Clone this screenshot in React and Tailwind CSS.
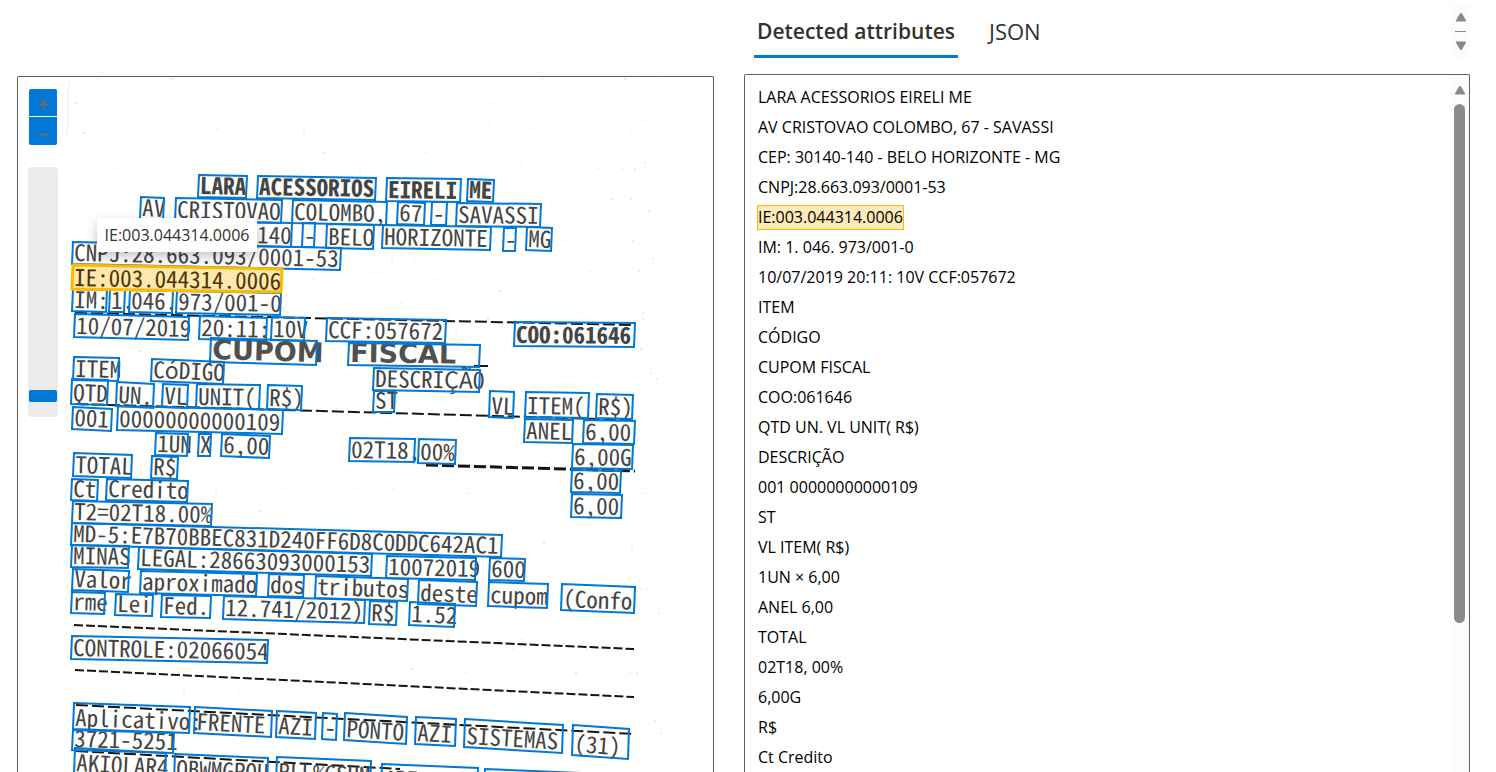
import React, { useState } from "react";

const MONO = '"Noto Sans Mono CJK JP", "Liberation Mono", monospace';

// Recognised words: text, left, top, width, height, drop across the width
const WORDS = [
  ["LARA", 199, 175, 48, 22, 1, "b"],
  ["ACESSORIOS", 258, 176, 118, 22, 2, "b"],
  ["EIRELI", 387, 178, 74, 23, 1, "b"],
  ["ME", 468, 179, 26, 22, 1, "b"],
  ["AV", 141, 197, 23, 22, 1],
  ["CRISTOVAO", 176, 198, 106, 23, 2],
  ["COLOMBO,", 293, 200, 94, 23, 2],
  ["67", 398, 202, 27, 22, 1],
  ["-", 432, 202, 15, 23, 0],
  ["SAVASSI", 457, 203, 84, 23, 1],
  ["CEP:", 130, 221, 46, 22, 1],
  ["30140-140", 187, 221, 105, 24, 2],
  ["-", 303, 223, 12, 24, 0],
  ["BELO", 327, 224, 47, 24, 1],
  ["HORIZONTE", 383, 225, 108, 23, 2],
  ["-", 504, 228, 12, 23, 0],
  ["MG", 527, 227, 25, 23, 1],
  ["CNPJ:28.663.093/0001-53", 73, 242, 268, 22, 6],
  ["IM:", 73, 289, 34, 22, 1],
  ["1.", 110, 290, 15, 22, 0],
  ["046.", 130, 290, 43, 22, 1],
  ["973/001-0", 177, 291, 104, 22, 2],
  ["10/07/2019", 75, 314, 114, 23, 3],
  ["20:11:", 200, 316, 67, 23, 2],
  ["10V", 272, 317, 33, 23, 1],
  ["CCF:057672", 327, 318, 119, 23, 2],
  ["COO:061646", 515, 322, 120, 24, 1, "b"],
  ["CUPOM", 211, 338, 106, 24, 3, "w"],
  ["FISCAL", 349, 343, 131, 22, 2, "w"],
  ["ITEM", 74, 357, 45, 23, 1],
  ["CóDIGO", 152, 359, 72, 22, 3],
  ["DESCRIÇÃO", 374, 368, 106, 22, 2],
  ["QTD", 72, 379, 36, 25, 1],
  ["UN.", 117, 382, 37, 24, 2],
  ["VL", 163, 384, 25, 23, 1],
  ["UNIT(", 197, 384, 63, 24, 1],
  ["R$)", 268, 385, 34, 24, 1],
  ["ST", 374, 391, 21, 21, 0],
  ["VL", 490, 391, 24, 26, 1],
  ["ITEM(", 526, 392, 63, 25, 1],
  ["R$)", 597, 394, 36, 24, 1],
  ["001", 73, 407, 39, 22, 2],
  ["00000000000109", 118, 406, 165, 24, 4],
  ["ANEL", 525, 419, 48, 23, 1],
  ["6,00", 584, 420, 51, 23, 1],
  ["1UN", 156, 433, 32, 22, 1],
  ["X", 199, 434, 12, 22, 0],
  ["6,00", 222, 434, 48, 22, 2],
  ["02T18,", 350, 438, 65, 23, 1],
  ["00%", 419, 439, 37, 24, 1],
  ["6,00G", 573, 444, 60, 24, 1],
  ["TOTAL", 74, 453, 58, 23, 2],
  ["R$", 152, 456, 26, 22, 1],
  ["6,00", 572, 470, 49, 22, 1],
  ["Ct", 72, 479, 26, 21, 1],
  ["Credito", 107, 479, 81, 21, 2],
  ["6,00", 572, 494, 50, 23, 1],
  ["T2=02T18.00%", 73, 501, 139, 22, 3],
  ["MD-5:E7B70BBEC831D240FF6D8C0DDC642AC1", 72, 523, 430, 22, 12],
  ["MINAS", 72, 545, 57, 22, 1],
  ["LEGAL:28663093000153", 139, 547, 233, 22, 7],
  ["10072019", 387, 556, 89, 22, 2],
  ["600", 490, 558, 35, 22, 1],
  ["Valor", 73, 569, 56, 21, 2],
  ["aproximado", 141, 571, 116, 22, 3],
  ["dos", 269, 574, 35, 22, 1],
  ["tributos", 316, 576, 92, 22, 3],
  ["deste", 419, 580, 58, 24, 2],
  ["cupom", 489, 582, 59, 24, 2],
  ["(Confo", 562, 584, 73, 26, 3],
  ["rme", 72, 592, 33, 21, 1],
  ["Lei", 116, 594, 37, 21, 1],
  ["Fed.", 162, 595, 49, 22, 1],
  ["12.741/2012)", 224, 596, 141, 23, 4],
  ["R$", 370, 601, 27, 23, 1],
  ["1.52", 410, 602, 45, 23, 2],
  ["CONTROLE:02066054", 72, 636, 196, 23, 4],
  ["Aplicativo:", 74, 703, 116, 26, 4],
  ["FRENTE", 195, 707, 77, 26, 4],
  ["AZI", 277, 711, 39, 26, 2],
  ["-", 323, 713, 14, 26, 1],
  ["PONTO", 345, 713, 62, 27, 4],
  ["AZI", 416, 717, 40, 27, 2],
  ["SISTEMAS", 465, 719, 98, 28, 6],
  ["(31)", 573, 725, 56, 30, 4],
  ["3721-5251", 73, 730, 101, 20, 3],
  ["AKIOLAR4", 75, 748, 91, 26, 5],
  ["QBWMGPOU", 175, 754, 93, 26, 4],
  ["RLL%GSHM", 277, 757, 94, 26, 4],
  ["4PE6ZCAE", 382, 764, 96, 26, 4],
  ["", 485, 769, 96, 26, 4],
];

// Printed rules: x1, y1, x2, y2, dash, thickness
const RULES = [
  [75, 313, 634, 325, "12 4", 2],
  [76, 404, 635, 420, "12 4", 2],
  [426, 465, 635, 471, "12 4", 3],
  [474, 366, 488, 366, "14 0", 2],
  [74, 625, 634, 649, "9 3", 2],
  [75, 670, 634, 697, "9 3", 2],
  [76, 705, 635, 734, "12 4", 2],
  [76, 751, 400, 769, "12 4", 2],
];

const SPECKS = Array.from({ length: 220 }, (_, i) => {
  const right = i % 3 === 0;
  const x = right ? 625 + ((i * 37) % 38) : 72 + ((i * 197) % 580);
  const y = 79 + ((i * 271 + i * i * 13) % 690);
  return [x, y, i % 4 === 0 ? 1 : 0.7, right ? "#f3dfe2" : i % 9 === 0 ? "#b9b4b6" : "#e6dcde"];
});

function Word({ item }) {
  const [text, x, y, w, h, dy, kind] = item;
  const wide = kind === "w";
  const angle = (Math.atan2(dy, w) * 180) / Math.PI;
  const tx = x + 1;
  const ty = y + h - 3;
  return (
    <g>
      {text && (
        <text
          x={tx}
          y={ty}
          transform={`rotate(${angle} ${tx} ${ty})`}
          fontFamily={wide ? '"DejaVu Sans", sans-serif' : MONO}
          fontSize={wide ? 27 : 23}
          fontWeight={kind ? 700 : 400}
          fill={wide ? "#505050" : "#444444"}
        >
          {text}
        </text>
      )}
      <polygon
        points={`${x},${y} ${x + w},${y + dy} ${x + w - 1},${y + dy + h} ${x - 1},${y + h}`}
        fill="none"
        stroke="#0078d7"
        strokeWidth="2"
      />
    </g>
  );
}

function Receipt() {
  return (
    <svg
      className="block h-full w-full"
      viewBox="18 77 695 695"
      preserveAspectRatio="xMinYMin slice"
      role="img"
      aria-label="Receipt"
    >
      <path d="M69 82C67 98 69 115 67 134" stroke="#fbeede" strokeWidth="1.5" fill="none" />
      {SPECKS.map(([x, y, r, c], i) => (
        <circle key={i} cx={x} cy={y} r={r} fill={c} />
      ))}
      {RULES.map(([x1, y1, x2, y2, dash, t], i) => (
        <line key={i} x1={x1} y1={y1} x2={x2} y2={y2} stroke="#151515" strokeWidth={t} strokeDasharray={dash} />
      ))}
      {WORDS.map((item, i) => (
        <Word key={i} item={item} />
      ))}
      <polygon points="73,265 282,269 281,292 72,289" fill="#ffe7ae" stroke="#ffb900" strokeWidth="3" />
      <text x="74" y="286" transform="rotate(1 74 286)" fontFamily={MONO} fontSize="23" fill="#4a3500">
        IE:003.044314.0006
      </text>
    </svg>
  );
}

const LINES = [
  "LARA ACESSORIOS EIRELI ME",
  "AV CRISTOVAO COLOMBO, 67 - SAVASSI",
  "CEP: 30140-140 - BELO HORIZONTE - MG",
  "CNPJ:28.663.093/0001-53",
  "IE:003.044314.0006",
  "IM: 1. 046. 973/001-0",
  "10/07/2019 20:11: 10V CCF:057672",
  "ITEM",
  "CÓDIGO",
  "CUPOM FISCAL",
  "COO:061646",
  "QTD UN. VL UNIT( R$)",
  "DESCRIÇÃO",
  "001 00000000000109",
  "ST",
  "VL ITEM( R$)",
  "1UN × 6,00",
  "ANEL 6,00",
  "TOTAL",
  "02T18, 00%",
  "6,00G",
  "R$",
  "Ct Credito",
];

function Arrow({ down }) {
  return (
    <svg width="12" height="10" viewBox="0 0 12 10" className="block" aria-hidden="true">
      <path
        d={down ? "M1.2 1h9.6L6.7 8.2Q6 9.2 5.3 8.2Z" : "M1.2 9h9.6L6.7 1.8Q6 .8 5.3 1.8Z"}
        fill="#8a8a8a"
        stroke="#8a8a8a"
        strokeLinejoin="round"
      />
    </svg>
  );
}

export default function App() {
  const [tab, setTab] = useState("attributes");
  const [zoom, setZoom] = useState(6);
  return (
    <main className="flex h-screen gap-[30px] overflow-hidden bg-white pr-[26px] pl-[17px] font-['Open_Sans',sans-serif] text-black">
      <section className="relative mt-[76px] min-w-0 flex-[695] overflow-hidden rounded-t-xs border border-b-0 border-[#605e5c]">
        <Receipt />
        <div className="absolute top-3 left-[11px] flex w-7 flex-col gap-px overflow-hidden rounded-xs">
          <button
            aria-label="Zoom in"
            onClick={() => setZoom(Math.min(100, zoom + 5))}
            className="flex h-[27px] items-center justify-center bg-[#0078d7] pt-1"
          >
            <svg width="11" height="11" viewBox="0 0 11 11" aria-hidden="true">
              <path d="M5.5 .5v10M.5 5.5h10" stroke="#6b6b6b" strokeWidth="2" />
            </svg>
          </button>
          <button
            aria-label="Zoom out"
            onClick={() => setZoom(Math.max(0, zoom - 5))}
            className="flex h-7 items-center justify-center bg-[#0078d7] pt-1.5"
          >
            <svg width="11" height="11" viewBox="0 0 11 11" aria-hidden="true">
              <path d="M.5 5.5h10" stroke="#6b6b6b" strokeWidth="2" />
            </svg>
          </button>
        </div>
        <input
          type="range"
          aria-label="Zoom level"
          value={zoom}
          onChange={(e) => setZoom(Number(e.target.value))}
          className="absolute top-[90px] left-2.5 h-[250px] w-[30px] appearance-none rounded bg-[#ebebeb] px-px [direction:rtl] [writing-mode:vertical-lr] [&::-webkit-slider-thumb]:h-3 [&::-webkit-slider-thumb]:w-7 [&::-webkit-slider-thumb]:appearance-none [&::-webkit-slider-thumb]:rounded-xs [&::-webkit-slider-thumb]:bg-[#0078d7]"
        />
        <div
          role="tooltip"
          className="absolute top-[141px] left-[79px] flex h-[34px] w-40 items-center justify-center rounded-xs bg-white text-base whitespace-nowrap text-[#323130] shadow-[0_4px_12px_rgba(0,0,0,0.25)]"
        >
          IE:003.044314.0006
        </div>
      </section>

      <section className="flex min-w-0 flex-[726] flex-col">
        <header className="flex h-[74px] shrink-0 items-start justify-between pl-2.5">
          <div role="tablist" className="flex gap-7 pt-2 text-[#323130]">
            <button
              role="tab"
              aria-selected={tab === "attributes"}
              onClick={() => setTab("attributes")}
              className="h-[50px] border-b-3 border-[#0078d7] px-[3px] text-[21px] font-semibold whitespace-nowrap"
            >
              Detected attributes
            </button>
            <button
              role="tab"
              aria-selected={tab === "json"}
              onClick={() => setTab("json")}
              className="h-[50px] border-b-3 border-transparent px-[3px] text-[22px]"
            >
              JSON
            </button>
          </div>
          <div className="mt-1 flex h-[55px] w-[19px] flex-col items-center justify-between bg-[#fcfcfc] py-2">
            <Arrow />
            <div className="h-px w-[11px] bg-[#8a8a8a]" />
            <Arrow down />
          </div>
        </header>
        <div className="flex min-h-0 flex-1 overflow-hidden rounded-t-xs border border-b-0 border-[#605e5c]">
          <ul className="min-w-0 flex-1 pt-[7px] pl-3 text-base whitespace-nowrap">
            {LINES.map((line) => (
              <li key={line} className="flex h-[30px] items-center">
                <span
                  className={
                    line.startsWith("IE:")
                      ? "border border-[#ffb900] bg-[#fdeab8] leading-[23px]"
                      : "border border-transparent leading-[23px]"
                  }
                >
                  {line}
                </span>
              </li>
            ))}
          </ul>
          <div className="flex w-[19px] shrink-0 flex-col items-center gap-[9px] bg-[#fcfcfc] pt-[10px]">
            <Arrow />
            <div className="h-[519px] w-[11px] rounded-full bg-[#8a8a8a]" />
          </div>
        </div>
      </section>
    </main>
  );
}
